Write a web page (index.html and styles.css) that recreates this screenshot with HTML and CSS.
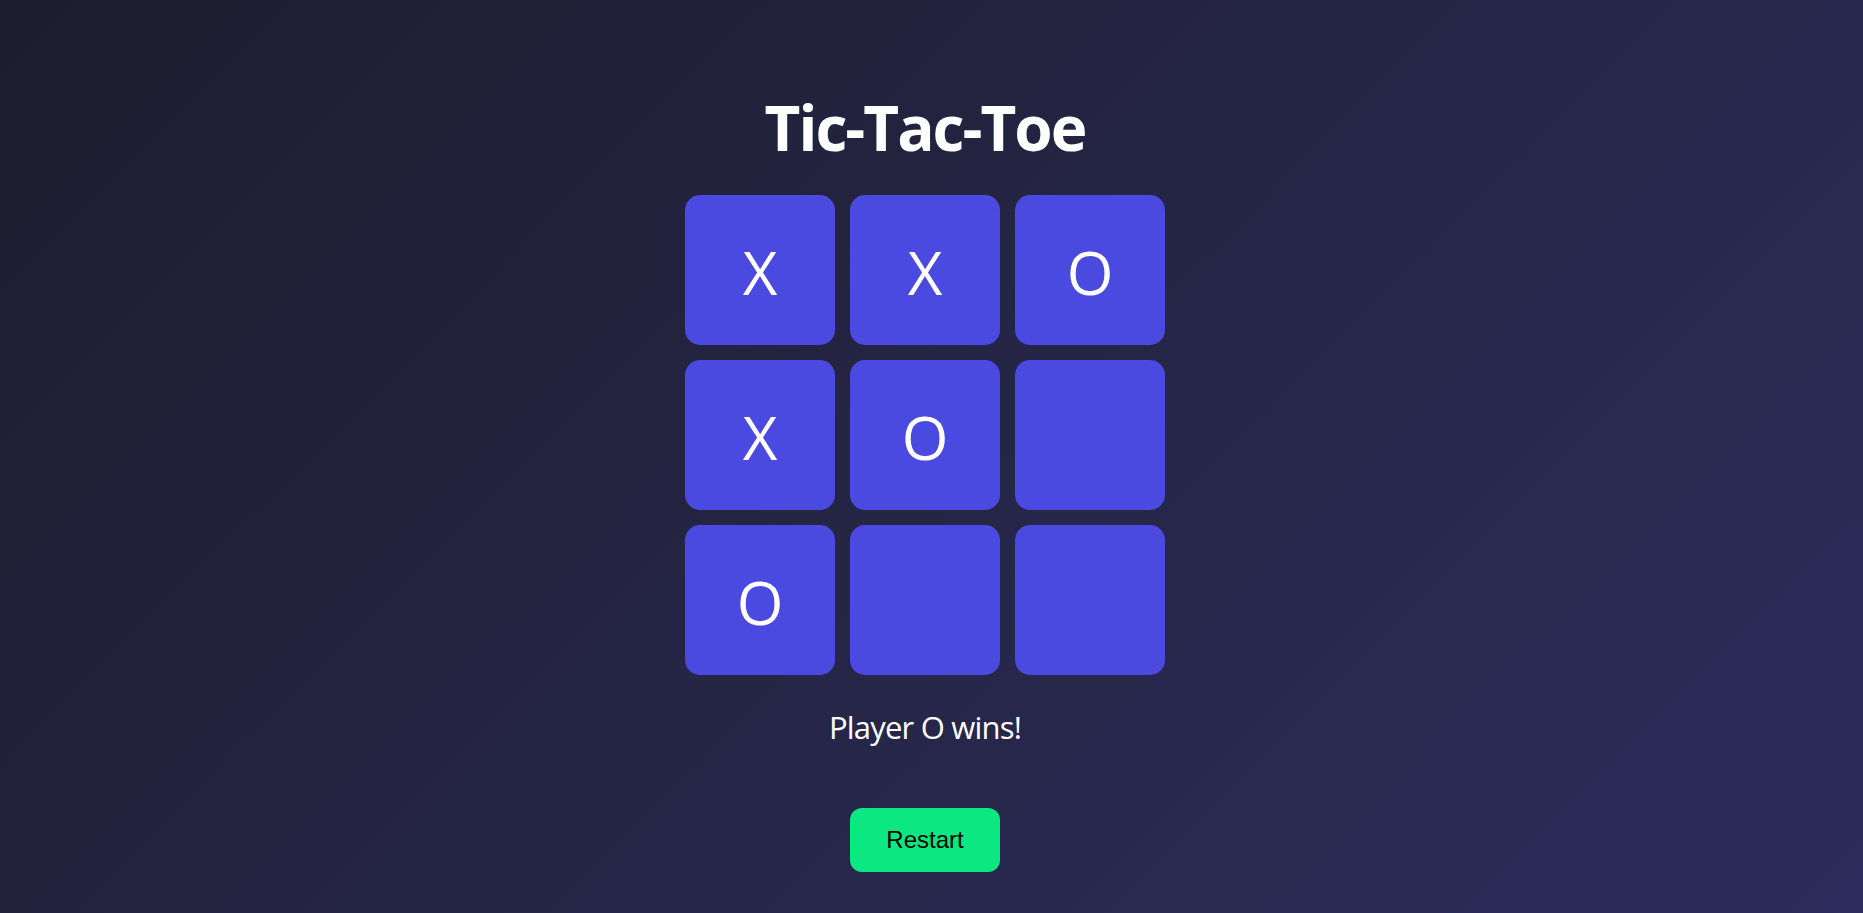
FILE: index.html
```html
<!DOCTYPE html>
<html lang="en">
<head>
<meta charset="utf-8">
<title>Tic-Tac-Toe</title>
<link rel="stylesheet" href="styles.css">
</head>
<body>
<main class="game">
  <h1 class="title">Tic-Tac-Toe</h1>
  <div class="board">
    <button class="cell">X</button>
    <button class="cell">X</button>
    <button class="cell">O</button>
    <button class="cell">X</button>
    <button class="cell">O</button>
    <button class="cell"></button>
    <button class="cell">O</button>
    <button class="cell"></button>
    <button class="cell"></button>
  </div>
  <p class="status">Player O wins!</p>
  <button class="restart">Restart</button>
</main>
</body>
</html>
```

FILE: styles.css
```css
html, body {
  margin: 0;
  padding: 0;
  height: 100%;
}

body {
  background: linear-gradient(135deg, #1d1d2e 0%, #2d2d5d 100%);
  color: #ffffff;
  font-family: "Open Sans", "Noto Sans", sans-serif;
  overflow: hidden;
}

.game {
  width: calc(100% - 13px);
  display: flex;
  flex-direction: column;
  align-items: center;
  padding-top: 89px;
}

.title {
  margin: 0;
  font-size: 62px;
  line-height: 76px;
  font-weight: 700;
  letter-spacing: -2px;
}

.board {
  margin-top: 30px;
  display: grid;
  grid-template-columns: repeat(3, 150px);
  grid-auto-rows: 150px;
  gap: 15px;
}

.cell {
  display: flex;
  align-items: center;
  justify-content: center;
  padding: 4px 0 0;
  border: none;
  border-radius: 15px;
  background: #4a4ae0;
  color: #ffffff;
  font-family: "Open Sans", "Noto Sans", sans-serif;
  font-size: 60px;
  font-weight: 400;
  line-height: 1;
}

.status {
  margin: 30px 0 0;
  font-size: 31px;
  line-height: 44px;
  font-weight: 400;
  letter-spacing: -0.8px;
}

.restart {
  margin-top: 59px;
  width: 150px;
  height: 64px;
  border: none;
  border-radius: 12px;
  background: #0be881;
  color: #000000;
  font-family: "Liberation Sans", Arial, sans-serif;
  font-size: 24px;
  padding: 0;
}
```
